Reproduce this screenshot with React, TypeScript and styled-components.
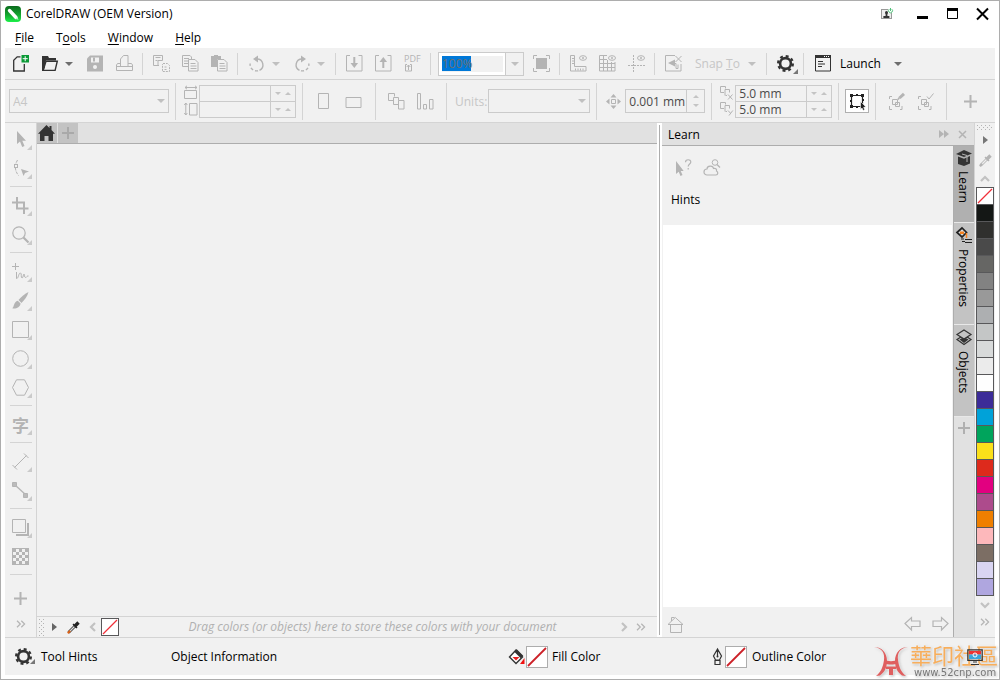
import React from "react";
import styled, { createGlobalStyle, css } from "styled-components";

const c = {
  panel: "#f1f1f1",
  head: "#e1e1e1",
  tab: "#c3c3c3",
  line: "#d4d4d4",
  edge: "#adadad",
  off: "#b4b4b4",
  offText: "#c6c6c6",
  dark: "#333333",
};

const GlobalStyle = createGlobalStyle`
  * { box-sizing: border-box; }
  body { margin: 0; background: #fff; }
  body, button, input, select { font-family: "Open Sans", "Noto Sans", sans-serif; font-size: 12px; }
  button { border: 0; padding: 0; background: none; color: inherit; }
  svg { display: block; flex: none; overflow: visible; }
`;

/* ---------- frame ---------- */

const Shell = styled.div`
  min-height: 100vh;
  display: flex;
  flex-direction: column;
  border: 1px solid ${c.edge};
  padding: 0 4px 4px;
  background: #fff;
  color: #000;
`;

const TitleBar = styled.header`
  display: flex;
  align-items: center;
  height: 25px;
  gap: 5px;
`;

const Title = styled.h1`
  margin: 0;
  flex: 1;
  font-size: 12px;
  font-weight: 400;
`;

const WindowButton = styled.button`
  width: 30px;
  height: 22px;
  display: grid;
  place-items: center;
`;

const WindowButtons = styled.div`
  display: flex;
  margin-right: -2px;
`;

const MenuBar = styled.nav`
  display: flex;
  align-items: center;
  gap: 22px;
  height: 22px;
  padding-left: 10px;
`;

const MenuItem = styled.button`
  u { text-underline-offset: 2px; }
`;

/* ---------- bars ---------- */

const Bar = styled.div<{ $tall?: boolean }>`
  display: flex;
  align-items: center;
  height: ${(p) => (p.$tall ? 43 : 32)}px;
  padding-left: ${(p) => (p.$tall ? 4 : 1)}px;
  background: ${c.panel};
  border-bottom: 1px solid ${c.line};
`;

const Rule = styled.span<{ $tall?: boolean }>`
  flex: none;
  width: 1px;
  height: ${(p) => (p.$tall ? 37 : 22)}px;
  margin: ${(p) => (p.$tall ? "0 4px 0 6px" : "0 4px 0 3px")};
  background: ${c.line};
`;

const Gap = styled.span<{ $w: number }>`
  flex: none;
  width: ${(p) => p.$w}px;
`;

const ToolButton = styled.button<{ $on?: boolean; $wide?: number }>`
  position: relative;
  flex: none;
  width: ${(p) => p.$wide ?? 29}px;
  height: 29px;
  display: flex;
  align-items: center;
  justify-content: center;
  color: ${(p) => (p.$on ? c.dark : c.off)};
`;

const Corner = styled.i<{ $on?: boolean }>`
  position: absolute;
  right: ${(p) => (p.$on ? 2 : 4)}px;
  bottom: 4px;
  border-left: 5px solid transparent;
  border-bottom: 5px solid ${(p) => (p.$on ? "#777" : "#cacaca")};
`;

const DropButton = styled(ToolButton)`
  width: 16px;
  padding-left: 1px;
  justify-content: flex-start;
  color: ${(p) => (p.$on ? "#6e6e6e" : "#c0c0c0")};
`;

const TextButton = styled.button<{ $on?: boolean }>`
  flex: none;
  width: ${(p) => (p.$on ? 101 : 75)}px;
  height: 29px;
  display: flex;
  align-items: center;
  gap: 8px;
  padding: 0 7px 0 7px;
  white-space: nowrap;
  color: ${(p) => (p.$on ? "#000" : c.offText)};
  svg:last-child { margin-left: auto; color: ${(p) => (p.$on ? "#6e6e6e" : "#c0c0c0")}; }
`;

const frame = css`
  border: 1px solid #cbcbcb;
  background: ${c.panel};
`;

const Combo = styled.div`
  display: flex;
  flex: none;
  width: 86px;
  height: 24px;
  margin: 0 3px;
  ${frame}
`;

const ComboField = styled.div`
  width: 67px;
  padding: 3px 2px 3px 3px;
  background: #fff;
  border-right: 1px solid #cbcbcb;
`;

const ZoomInput = styled.input`
  display: block;
  width: 100%;
  height: 16px;
  padding: 0;
  border: 0;
  color: #6b7075;
  background: linear-gradient(#0078d7, #0078d7) 0 0 / 29px 15px no-repeat ${c.panel};
`;

const ComboArrow = styled.button`
  flex: 1;
  display: grid;
  place-items: center;
  color: #c0c0c0;
`;

const SelectBox = styled.div<{ $width: number }>`
  display: flex;
  align-items: center;
  flex: none;
  width: ${(p) => p.$width}px;
  height: 24px;
  padding-right: 3px;
  color: #c0c0c0;
  ${frame}
  select {
    flex: 1;
    min-width: 0;
    height: 22px;
    padding: 0 0 0 3px;
    border: 0;
    appearance: none;
    background: none;
    color: ${c.offText};
    opacity: 1;
  }
`;

const Label = styled.label`
  color: ${c.offText};
  margin: 0 1px 0 4px;
`;

const Stack = styled.div`
  display: flex;
  flex: none;
  flex-direction: column;
`;

const PairField = styled.div<{ $side?: boolean }>`
  display: flex;
  flex: none;
  width: ${(p) => (p.$side ? 80 : 97)}px;
  height: ${(p) => (p.$side ? 24 : 17)}px;
  ${frame}
  & + & { margin-top: -1px; }
  input {
    flex: 1;
    min-width: 0;
    padding: 0 0 0 3px;
    border: 0;
    border-right: 1px solid #cbcbcb;
    background: none;
    color: #4a4a4a;
  }
`;

const Spin = styled.span<{ $column?: boolean }>`
  display: flex;
  flex: none;
  flex-direction: ${(p) => (p.$column ? "column" : "row")};
  align-items: center;
  justify-content: space-evenly;
  width: ${(p) => (p.$column ? 17 : 24)}px;
  color: #c4c4c4;
`;

const IconColumn = styled.div`
  display: flex;
  flex: none;
  flex-direction: column;
  gap: 2px;
  margin-right: 1px;
  color: ${c.off};
`;

const BoundsButton = styled.button`
  flex: none;
  width: 24px;
  height: 24px;
  margin-left: 2px;
  display: grid;
  place-items: center;
  background: #fff;
  border: 1px solid #b0b0b0;
  color: #222;
`;

/* ---------- body ---------- */

const Body = styled.main`
  flex: 1;
  display: flex;
  min-height: 0;
`;

const Toolbox = styled.aside`
  flex: none;
  display: flex;
  flex-direction: column;
  width: 32px;
  padding-top: 2px;
  background: ${c.panel};
  border-right: 1px solid ${c.line};
`;

const BoxTool = styled(ToolButton)<{ $high?: number }>`
  width: 31px;
  height: ${(p) => p.$high ?? 29}px;
`;

const BoxRule = styled.span`
  flex: none;
  height: 1px;
  margin: 3px 4px 4px 5px;
  background: ${c.line};
`;

const Document = styled.section`
  flex: 1;
  min-width: 0;
  display: flex;
  flex-direction: column;
  background: ${c.panel};
`;

const DocTabs = styled.div`
  display: flex;
  gap: 1px;
  height: 21px;
  background: ${c.head};
  border-bottom: 1px solid ${c.edge};
`;

const DocTab = styled.button<{ $on?: boolean }>`
  width: 20px;
  display: flex;
  align-items: center;
  padding-left: ${(p) => (p.$on ? 1 : 4)}px;
  background: ${c.tab};
  color: ${(p) => (p.$on ? c.dark : "#a9a9a9")};
`;

const Canvas = styled.div`
  flex: 1;
`;

const DocPalette = styled.div`
  display: flex;
  align-items: center;
  height: 21px;
  border-top: 1px solid ${c.line};
  padding: 0 11px 0 2px;
  color: ${c.off};
`;

const PaletteButton = styled.button<{ $w: number; $on?: boolean }>`
  flex: none;
  width: ${(p) => p.$w}px;
  height: 18px;
  display: grid;
  place-items: center;
  color: ${(p) => (p.$on ? "#666" : c.off)};
`;

const NoneSwatch = styled.button`
  flex: none;
  width: 18px;
  height: 18px;
  border: 1px solid #58585a;
  background: #fff;
`;

const PaletteHint = styled.p`
  flex: 1;
  margin: 0;
  padding-left: 14px;
  text-align: center;
  line-height: 16px;
  font-size: 12px;
  font-style: italic;
  color: #b0b0b0;
  white-space: nowrap;
`;

const Splitter = styled.div`
  flex: none;
  width: 5px;
  display: flex;
  justify-content: center;
  padding: 2px 0;
  background: #fff;
  &::after { content: ""; width: 1px; background: ${c.edge}; }
`;

const Docker = styled.section`
  flex: none;
  width: 312px;
  display: flex;
  flex-direction: column;
  background: ${c.panel};
`;

const DockerHead = styled.header`
  display: flex;
  align-items: center;
  height: 23px;
  padding: 0 4px 0 6px;
  background: ${c.head};
  border-bottom: 1px solid ${c.edge};
  color: #a8a8a8;
`;

const DockerTitle = styled.h2`
  flex: 1;
  margin: 0;
  font-size: 12px;
  font-weight: 400;
  color: #000;
`;

const DockerMain = styled.div`
  flex: 1;
  display: flex;
`;

const DockerPage = styled.div`
  flex: 1;
  display: flex;
  flex-direction: column;
  border-right: 1px solid ${c.edge};
`;

const DockerTools = styled.div`
  display: flex;
  height: 43px;
  padding-left: 7px;
  align-items: center;
`;

const Hints = styled.h3`
  height: 36px;
  margin: 0;
  padding: 3px 0 0 9px;
  font-size: 12px;
  line-height: 16px;
  font-weight: 400;
`;

const HintView = styled.div`
  flex: 1;
  margin: 0 1px;
  background: #fff;
`;

const DockerFoot = styled.footer`
  display: flex;
  align-items: center;
  height: 30px;
  padding-top: 4px;
  color: #b0b0b0;
`;

const Push = styled.span`
  flex: 1;
`;

const DockerTabs = styled.div`
  flex: none;
  width: 20px;
  display: flex;
  flex-direction: column;
  background: ${c.head};
`;

const DockerTab = styled.button<{ $h: number; $on?: boolean }>`
  height: ${(p) => p.$h}px;
  display: flex;
  flex-direction: column;
  align-items: center;
  gap: 5px;
  padding-top: 4px;
  border-bottom: 1px solid #e8e8e8;
  background: ${(p) => (p.$on ? "#b0b0b0" : c.tab)};
  color: #333;
  span { writing-mode: vertical-rl; line-height: 18px; color: #000; margin-right: 2px; }
`;

const AddTab = styled.button`
  height: 22px;
  display: grid;
  place-items: center;
  color: #b0b0b0;
`;

const ColorColumn = styled.aside`
  flex: none;
  width: 21px;
  display: flex;
  flex-direction: column;
  align-items: center;
  padding-top: 2px;
  background: ${c.panel};
  border-left: 1px solid ${c.line};
  color: ${c.off};
`;

const ColumnButton = styled.button<{ $h: number; $on?: boolean }>`
  flex: none;
  width: 18px;
  height: ${(p) => p.$h}px;
  display: grid;
  place-items: center;
  color: ${(p) => (p.$on ? "#777" : c.off)};
`;

const Swatches = styled.div`
  flex: none;
  width: 18px;
  padding: 1px 1px 0;
  background: #58585a;
`;

const Swatch = styled.button<{ $color: string }>`
  display: block;
  width: 16px;
  height: 16px;
  margin-bottom: 1px;
  background: ${(p) => p.$color};
`;

/* ---------- status ---------- */

const StatusBar = styled.footer`
  position: relative;
  display: grid;
  grid-template-columns: 157px 1fr 204px 255px 28px;
  align-items: center;
  height: 38px;
  padding-left: 9px;
  background: ${c.panel};
  border-top: 1px solid ${c.line};
`;

const StatusItem = styled.div<{ $gap?: number }>`
  display: flex;
  align-items: center;
  gap: ${(p) => p.$gap ?? 1}px;
  white-space: nowrap;
  span { margin-left: 3px; }
`;

const GearSlot = styled.button`
  position: relative;
  width: 23px;
  height: 22px;
  padding-left: 1px;
  display: flex;
  align-items: center;
`;

const ColorWell = styled.button`
  width: 22px;
  height: 22px;
  border: 1px solid #adadad;
  background: #fff;
`;

const ProofButton = styled.button`
  position: relative;
  z-index: 1;
  width: 16px;
`;

const Watermark = styled.div`
  position: absolute;
  right: -3px;
  bottom: -4px;
  display: flex;
  align-items: center;
  gap: 2px;
  filter: drop-shadow(0 0 1px #fff) drop-shadow(1px 1px 1px #bbb);
`;

const MarkText = styled.div`
  display: flex;
  flex-direction: column;
`;

const MarkName = styled.strong`
  font-family: "Noto Sans CJK TC", sans-serif;
  font-size: 22px;
  line-height: 24px;
  font-weight: 400;
  color: #f7ae5c;
`;

const MarkSite = styled.small`
  font-family: "DejaVu Sans", sans-serif;
  font-size: 10px;
  line-height: 13px;
  padding-left: 4px;
  color: #777;
`;

/* ---------- drawings ---------- */

const S = ({ w = 17, h = 17, children }: { w?: number; h?: number; children: React.ReactNode }) => (
  <svg width={w} height={h} viewBox={`0 0 ${w} ${h}`} fill="none" stroke="currentColor" aria-hidden="true">
    {children}
  </svg>
);
const Fill = ({ d, color = "currentColor" }: { d: string; color?: string }) => <path d={d} fill={color} stroke="none" />;

const Down = ({ w = 8 }: { w?: number }) => (
  <S w={w} h={w / 2}><Fill d={`M0 0H${w}L${w / 2} ${w / 2}z`} /></S>
);
const Up = ({ w = 6 }: { w?: number }) => (
  <S w={w} h={w / 2}><Fill d={`M0 ${w / 2}H${w}L${w / 2} 0z`} /></S>
);

const Logo = () => (
  <S w={16} h={16}>
    <defs>
      <linearGradient id="logo" x1="0" y1="0" x2="0" y2="1">
        <stop offset="0" stopColor="#0b6b1d" />
        <stop offset="0.55" stopColor="#14a52f" />
        <stop offset="1" stopColor="#1df04a" />
      </linearGradient>
    </defs>
    <rect width="16" height="16" rx="4" fill="url(#logo)" stroke="none" />
    <path d="M4.5 4.5L11 11.5" stroke="#fff" strokeWidth="3.4" strokeLinecap="round" />
    <path d="M10.5 12.5l3 1.5-1-3z" fill="#bff5c8" stroke="none" />
  </S>
);

const User = () => (
  <S w={12} h={12}>
    <rect x="0.5" y="1.5" width="10" height="9" stroke="#999" fill="#eee" />
    <circle cx="5.5" cy="4.5" r="1.5" fill="#333" stroke="none" />
    <Fill d="M4.6 5h1.8v3h2v2h-6V8h2.2z" color="#333" />
    <rect x="7" y="0" width="5" height="5" fill="#fff" stroke="none" />
    <path d="M8.2 1.2a2 2 0 1 0 2.6 0M9.5 0v3" stroke="#4fc078" />
  </S>
);

const NewDoc = () => (
  <S>
    <path d="M8.5 1.8H5.2L1.7 5.3V16H12.3V9" stroke="#333" strokeWidth="1.3" />
    <Fill d="M9.500 0h7.500v7.500H9.500z" color="#0a9a36" />
    <path d="M13.200 1.200v5M10.700 3.700h5" stroke="#fff" />
  </S>
);
const Folder = () => (
  <S>
    <Fill d="M1 1h6l1 2h7v2.500H5L2.200 15H1z" />
    <path d="M5 6.200h11.300l-2.200 9.200H2.200z" strokeWidth="1.400" />
    <Fill d="M1 4h3v8l-2 4H1z" />
  </S>
);
const Save = () => (
  <S>
    <Fill d="M3 0.500h13v16H0V3.500z" />
    <path d="M4 2.500h8v5H4z" fill="#f1f1f1" stroke="none" />
    <Fill d="M6 2.500h2v4H6z" />
    <circle cx="8" cy="12" r="2" fill="#f1f1f1" stroke="none" />
  </S>
);
const Print = () => (
  <S>
    <path d="M5 8.500H1.500L.5 10v5.500h16V10l-1-1.500H12M.5 11.500h16M4.500 11V4l3-3.500h4.500V11" />
  </S>
);
const Cut = () => (
  <S>
    <path d="M6 10.500H.5V.5h9v5H5v5M2.500 2.500h5M2.500 5.500h2" />
    <path d="M10 8.500h4.500l2 2v6H9.500V9M11.500 12h3M11.500 14.500h3" strokeDasharray="2 1" />
  </S>
);
const Copy = () => (
  <S>
    <path d="M6 11.500H.5V.5H8l1.500 1.500v2M2 3.500h5M2 6h4M2 8.500h4" />
    <path d="M6.500 4.500H13l3 3v8.500H6.500zM8.500 8.500h5M8.500 11h6M8.500 13.500h6" />
  </S>
);
const Paste = () => (
  <S>
    <Fill d="M0 1h3V0h4v1h3v3H6v8H0z" />
    <path d="M6.500 4.500H13l3 3v8.500H6.500zM8.500 8.500h5M8.500 11h6M8.500 13.500h6" />
  </S>
);
const UndoArc = () => (
  <>
    <path d="M8 4a6 6 0 0 1 2.500 11.400" strokeWidth="1.400" />
    <path d="M9 15.700A6.300 6.300 0 0 1 1.200 8.500" strokeWidth="1.400" strokeDasharray="3 2" />
    <Fill d="M4 4L9 0.500v7z" />
  </>
);
const Undo = () => <S w={16}><UndoArc /></S>;
const Redo = () => <S w={16}><g transform="matrix(-1 0 0 1 16 0)"><UndoArc /></g></S>;
const Import = () => (
  <S>
    <path d="M4 .5H.5v15.500h15.500V.5H12.500" />
    <path d="M8.300 2v7" strokeWidth="2" />
    <Fill d="M4.500 8h7.600l-3.800 5z" />
  </S>
);
const Export = () => (
  <S>
    <path d="M4 .5H.5v15.500h15.500V.5H12.500" />
    <path d="M8.300 13V6" strokeWidth="2" />
    <Fill d="M4.500 7h7.600L8.300 2z" />
  </S>
);
const PdfText = styled.text`
  font: 9px "Open Sans", sans-serif;
  fill: currentColor;
  stroke: none;
`;
const Pdf = () => (
  <S w={19}>
    <PdfText x="1" y="7">PDF</PdfText>
    <path d="M4 9.500H2.500v6.500h6V9.500H7M5.500 15v-5M3.700 12l1.800-2 1.800 2" />
  </S>
);
const Full = () => (
  <S>
    <path d="M4 .5H.5V4M13 .5h3.500V4M4 16.500H.5V13M13 16.500h3.500V13" />
    <Fill d="M3 3h11v11H3z" />
  </S>
);
const Eye = () => (
  <>
    <ellipse cx="13" cy="3" rx="3.500" ry="2.300" />
    <circle cx="13" cy="3" r="1" fill="currentColor" stroke="none" />
  </>
);
const Rulers = () => (
  <S>
    <path d="M.5.500h4v11H16v4.500H.5zM2 3.500h2M2 6h2M2 8.500h2M5.500 13.500v2M8 13.500v2M10.500 13.500v2M13 13.500v2" />
    <Eye />
  </S>
);
const Grid = () => (
  <S>
    <path d="M8 .5H.5v15.500H16V7M0 4.500h8M0 8.500h16M0 12.500h16M4.500 0v16M8.500 5v11M12.500 7v9" />
    <Eye />
  </S>
);
const Guides = () => (
  <S>
    <path d="M5.500 0v17M0 10.500h17" strokeDasharray="2 1" />
    <Eye />
  </S>
);
const SnapOff = () => (
  <S>
    <path d="M10 .5H.5v15.500H16V9M10.500 1l6 6M16.500 1l-6 6" />
    <Fill d="M3 8l7-3.500v7z" />
    <path d="M8 8.500h3v5h2v-4" />
  </S>
);
const Gear = ({ color = "#333" }: { color?: string }) => (
  <S>
    <circle cx="8.500" cy="8.500" r="5.400" stroke={color} strokeWidth="2.600" />
    <circle cx="8.500" cy="8.500" r="7.400" stroke={color} strokeWidth="2.200" strokeDasharray="2.906 2.906" />
  </S>
);
const LaunchIcon = () => (
  <S>
    <path d="M.5.500h15v15.500H.5zM3 6.500h5M3 9h7M3 11.500h4" stroke="#333" />
    <Fill d="M0 0h16v3H0z" color="#333" />
    <path d="M9 1.500h1M11 1.500h1M13 1.500h1" stroke="#fff" />
  </S>
);

const PageW = () => (
  <S w={14} h={15}>
    <path d="M1 2.500h12M3 .8L1 2.500l2 1.700M11 .8l2 1.700-2 1.700M.5 5.500h12v8H.5z" />
  </S>
);
const PageH = () => (
  <S w={14} h={15}>
    <path d="M1.800 1v12M.3 3l1.500-2 1.500 2M.3 11l1.500 2 1.500-2M5.500 1.500h7.500v11.500H5.500z" />
  </S>
);
const Portrait = () => <S><path d="M1.500.500h10v15h-10z" /></S>;
const Landscape = () => <S><path d="M0 4.500h15v10H0z" /></S>;
const AllPages = () => (
  <S><path d="M5 7.500H.5V.5h6v3M10 11.500H5.500v-7h5v3M10.500 7.500h5.500v8.500h-5.500z" /></S>
);
const Heights = () => (
  <S><path d="M.5.500h3v15.500h-3zM6.500 11.500h3v4.500h-3zM12.500 6.500h3.500v9.500h-3.500z" /></S>
);
const Nudge = () => (
  <S w={15} h={15}>
    <path d="M5.500 5.500h4v4h-4z" />
    <Fill d="M7.500 0l3 3.500h-6zM7.500 15l3-3.500h-6zM0 7.500l3.500-3v6zM15 7.500l-3.500-3v6z" />
  </S>
);
const Dup = ({ axis }: { axis: string }) => (
  <S w={14} h={14}>
    <path d="M4 6.500H.5v-6h5v2M5 9.500V3.500h4.500v3M7 9.500H5.500" />
    {axis === "x" ? <path d="M8 8.500l4.500 5M12.500 8.500L8 13.500" /> : <path d="M8 8.500l2.300 2.500M12.800 8.500L9 13.500" />}
  </S>
);
const Bounds = () => (
  <S>
    <path d="M2.500 2.500h11v11h-11z" strokeWidth="1.200" />
    <Fill d="M1 1h3v3H1zM12 1h3v3h-3zM1 12h3v3H1zM7 1h2v2H7zM1 7h2v2H1zM7 13h2v2H7zM13 6h2v2h-2z" />
    <path d="M11.500 8.500l5.500 5.500-2.300.300 1 2.500-1.500.700-1.200-2.500-1.500 1.500z" fill="#222" stroke="#fff" strokeWidth="0.600" />
  </S>
);
const Objs = () => (
  <path d="M4 3.500H1.500V6M1.500 13v3.500H4M12 16.500h2V13M4.500 6.500h5v5h-5zM7.500 9.500h4v4h-4z" />
);
const EditObjs = () => (
  <S><Objs /><path d="M10 6.500l1.500-2" strokeWidth="1.500" /><path d="M11.500 5L16 .8" strokeWidth="3" /></S>
);
const CheckObjs = () => (
  <S><Objs /><path d="M10 3.500l2 2.500L16.500.5" /></S>
);
const Plus = ({ s = 13 }: { s?: number }) => (
  <S w={s} h={s}><path d={`M${s / 2} 0V${s}M0 ${s / 2}H${s}`} strokeWidth="2" /></S>
);

const Pick = () => <S><Fill d="M5 0v13l3-2.500 2.200 5.500 2.300-1-2.200-5.200H14z" /></S>;
const Shape = () => (
  <S>
    <path d="M5.500 0C3 4 2 10 6.500 15.500" strokeDasharray="3 1" />
    <rect x="2.500" y="4.500" width="3" height="3" fill="#f1f1f1" />
    <Fill d="M9 9l8 2.500-4 1.500-1.500 3z" />
  </S>
);
const Crop = () => (
  <S><path d="M5 0v11.500h11.500M0 5.500h12V17" strokeWidth="2" /></S>
);
const Zoom = () => (
  <S><circle cx="7" cy="7" r="6.200" strokeWidth="1.200" /><path d="M11.500 11.500l5 5" strokeWidth="2.200" /></S>
);
const Freehand = () => (
  <S><path d="M3.500 0v7M0 3.500h7M4.500 9v6.500c2 .500 2-6 4-5.500 1.500 0 0 5 1.500 5s1-4 2-4 0 3.500 1.500 3.500S15 12.500 16.500 13" /></S>
);
const Brush = () => (
  <S><Fill d="M16.500 0C13 1.500 9 5 6.500 8l3 3C12.500 8 15.500 4 16.500 0z" /><Fill d="M5.800 8.800l2.800 2.700C8 15.500 4 17 .3 16.300 2.300 15 1.500 10 5.800 8.800z" /></S>
);
const Rect = () => <S><path d="M.5.500h16v16h-16z" /></S>;
const Ellipse = () => <S><circle cx="8.500" cy="8.500" r="7.800" /></S>;
const Polygon = () => <S><path d="M4.500.800h8l4 7.700-4 7.700h-8L.500 8.500z" /></S>;
const GlyphTool = styled.span`
  font: 700 17px/17px "Noto Sans CJK SC", sans-serif;
`;
const Dimension = () => (
  <S><path d="M2.500 14.500l12-12M.5 12l4.500 4.500M12 .5L16.500 5" /></S>
);
const Connector = () => (
  <S><path d="M3 3l11 10" strokeWidth="1.300" /><path d="M.5.500h4v4h-4zM11.500 11.500h4v4h-4z" fill="#bbb" /></S>
);
const Shadow = () => (
  <S><path d="M.5.500h13v13h-13z" /><path d="M16 4v12H4" strokeWidth="2" /></S>
);
const Checker = () => (
  <S>
    <rect x="0.500" y="0.500" width="16" height="16" />
    {[0, 1, 2, 3, 4].map((r) =>
      [0, 1, 2, 3, 4].map((k) => ((r + k) % 2 ? null : <rect key={`${r}${k}`} x={1 + k * 3} y={1 + r * 3} width="3" height="3" fill="currentColor" stroke="none" />))
    )}
  </S>
);
const More = () => <S w={10} h={8}><path d="M1 .8L4.300 4 1 7.200M5.300.800L8.600 4 5.300 7.200" strokeWidth="1.200" /></S>;
const HomeIcon = () => <S><Fill d="M8.500 0L11.500 3V1h2v4l3.500 3.700h-2V16h-4.500v-5h-4v5H2V8.700H0z" /></S>;

const Dots = ({ wide }: { wide?: boolean }) => {
  const n = wide ? 4 : 5;
  return (
    <S w={wide ? 16 : 6} h={wide ? 5 : 16}>
      {Array.from({ length: n }, (_, i) => i * 4).map((p) =>
        wide ? (
          <Fill key={p} d={`M${p} 0h1v1h-1zM${p + 2} 2h1v1h-1zM${p} 4h1v1h-1z`} />
        ) : (
          <Fill key={p} d={`M0 ${p}h1v1H0zM2 ${p + 2}h1v1H2zM4 ${p}h1v1H4z`} />
        )
      )}
    </S>
  );
};
const Right = () => <S w={5} h={8}><Fill d="M0 0l5 4-5 4z" /></S>;
const Chevron = ({ d }: { d: string }) => <S w={10} h={10}><path d={d} strokeWidth="2.200" stroke="#c2c2c2" /></S>;
const Dropper = ({ on }: { on?: boolean }) => (
  <S w={13} h={13}>
    <path d="M1.500 11.500L8 5" stroke={on ? "#333" : "currentColor"} strokeWidth="2.800" />
    <path d="M2.500 10.500L8 5" stroke={on ? "#ddd" : "#eee"} strokeWidth="1.200" />
    <path d="M.8 12.200l2.400-2.400" stroke={on ? "#e0651a" : "currentColor"} strokeWidth="2" />
    <path d="M7.500 5.500l4-4" stroke={on ? "#222" : "currentColor"} strokeWidth="3.400" />
    <path d="M6 3l4 4" stroke={on ? "#222" : "currentColor"} strokeWidth="1.400" />
  </S>
);
const NoColor = ({ s = 16 }: { s?: number }) => (
  <S w={s} h={s}><path d={`M1 ${s - 1}L${s - 1} 1`} stroke={s > 16 ? "#cc2027" : "#f0303a"} strokeWidth={s > 16 ? 1.8 : 1.2} /></S>
);

const WhatsThis = () => (
  <S w={19}><Fill d="M2 2v13l2.700-2.300L6.500 17l2-1-1.800-4h3z" /><path d="M11.500 3.200C11.500 0 16.800 0 16.800 3c0 2-2.600 2-2.600 4.500M14.200 9v1.500" strokeWidth="1.200" /></S>
);
const CloudSearch = () => (
  <S w={19}><path d="M4 16a3 3 0 0 1 0-6c0-3.500 6-4 6.500-.5 2-.5 3.500.5 3 2.500 2 1 1.500 4-.5 4z" strokeWidth="1.200" /><circle cx="12" cy="3.500" r="2.800" /><path d="M14 5.500l3 3" strokeWidth="1.300" /></S>
);
const Cap = () => (
  <S w={16} h={16}><Fill d="M0 4l8-4 8 3.500L8 7z" /><Fill d="M2 6.500l6 2.300L14 6v7.500L8 16l-6-2z" /><path d="M6 4l5 1.500V12" stroke="#b0b0b0" /></S>
);
const Props = () => (
  <S w={16} h={17}>
    <path d="M1 5.500L6 1l4.500 4.500L6 10z" strokeWidth="1.700" stroke="#222" fill="#ddd" />
    <Fill d="M4 4.500h4v2.500H4z" color="#f58220" />
    <path d="M10.500 6v5" stroke="#f58220" strokeWidth="1.500" />
    <path d="M5 12h3M6 14.500h3M9 12.500h7M9 15.500h7" stroke="#222" />
  </S>
);
const Layers = () => (
  <S w={16} h={17}>
    <path d="M1 10.500L8 6l7 4.500L8 15.500z" strokeWidth="1.200" />
    <Fill d="M3.500 10.500L8 8l4.500 2.500L8 14z" />
    <path d="M8 1l7 4.500L8 10 1 5.500z" strokeWidth="1.200" fill={c.tab} />
  </S>
);
const FootHome = () => <S w={17}><path d="M1 8.500L8.300 1.500 16 8.500zM3.500 9v7.500h11V9M4.500 5V1.500h3" /></S>;
const ArrowL = () => <S w={17} h={16}><path d="M1 7.500L7.500 1.500v3.500h8.500v5.500H7.500V14z" strokeWidth="1.200" /></S>;
const ArrowR = () => <S w={17} h={16}><path d="M16 7.500L9.500 1.500v3.500H1v5.500h8.500V14z" strokeWidth="1.200" /></S>;
const Bucket = () => (
  <S w={17} h={17}>
    <path d="M1.500 9L8 2l6.500 7L8 15.500z" stroke="#333" strokeWidth="1.400" fill="#fff" />
    <path d="M7.500 2.500l6.500 6.500" stroke="#333" strokeWidth="3.500" />
    <Fill d="M4.500 9h7L8 12.500z" color="#e61e1e" />
    <Fill d="M16.500 10v6h-4.500z" color="#f01010" />
  </S>
);
const Pen = () => (
  <S w={11} h={17}>
    <path d="M5.500 1L1.500 8l2 4h4l2-4zM5.500 1v7M3 12.500h5v4H3z" stroke="#333" strokeWidth="1.200" />
    <circle cx="5.500" cy="8.500" r="1" fill="#333" stroke="none" />
  </S>
);
const Proof = () => (
  <S w={16} h={16}>
    <path d="M.8.800h14.400v10.500H.8zM4 15.500h8M6 13h4" stroke="#333" strokeWidth="1.200" />
    <Fill d="M2 2h12v3.500H2z" color="#e33" />
    <Fill d="M2 5.500h12V10H2z" color="#3aa5dc" />
    <circle cx="8" cy="6" r="2" stroke="#fff" />
  </S>
);
const Emblem = () => (
  <svg width="34" height="32" viewBox="0 0 34 32" aria-hidden="true">
    <g fill="#df5f5f">
      <path d="M0 2C8 3 11 8 10 15C9 22 7 27 2 31L6 30.500C11 27 13 22 13 16C13 8 8 2 0 2z" />
      <path d="M34 2C26 3 23 8 24 15C25 22 27 27 32 31L28 30.500C23 27 21 22 21 16C21 8 26 2 34 2z" />
      <path d="M10 14C14 17 20 17 24 14V18C20 20 14 20 10 18z" />
      <path d="M12 21.500h10V24h-3v6h-4v-6h-3z" />
    </g>
  </svg>
);

/* ---------- content ---------- */

const swatches = [
  "#141715", "#30302e", "#4a4a4a", "#666664", "#828282", "#999999", "#adafb1", "#c4c6c6",
  "#d8dada", "#ebebeb", "#fefefe", "#3c2c98", "#00a2d9", "#00a45c", "#fbe01a", "#dd2a1c",
  "#e20080", "#ad4b8c", "#ef7f00", "#fdb8bb", "#7c6e64", "#d9d5f2", "#afa6df",
];

const toolGroups: [string, React.ReactNode, boolean][][] = [
  [["Pick", <Pick />, true], ["Shape", <Shape />, true]],
  [["Crop", <Crop />, true], ["Zoom", <Zoom />, true]],
  [["Freehand", <Freehand />, true], ["Brush", <Brush />, true], ["Rectangle", <Rect />, true], ["Ellipse", <Ellipse />, true], ["Polygon", <Polygon />, true]],
  [["Text", <GlyphTool>字</GlyphTool>, true]],
  [["Dimension", <Dimension />, true], ["Connector", <Connector />, true]],
  [["Drop shadow", <Shadow />, true], ["Transparency", <Checker />, false]],
];

const Tool = ({ name, children, on, wide }: { name: string; children: React.ReactNode; on?: boolean; wide?: number }) => (
  <ToolButton aria-label={name} $on={on} $wide={wide}>{children}</ToolButton>
);

const NumberPair = ({ names, value }: { names: string[]; value: string }) => (
  <Stack>
    {names.map((n) => (
      <PairField key={n}>
        <input aria-label={n} defaultValue={value} />
        <Spin><Down w={6} /><Up /></Spin>
      </PairField>
    ))}
  </Stack>
);

export default function App() {
  return (
    <>
      <GlobalStyle />
      <Shell>
        <TitleBar>
          <Logo />
          <Title>CorelDRAW (OEM Version)</Title>
          <WindowButton aria-label="Account"><User /></WindowButton>
          <WindowButtons>
            <WindowButton aria-label="Minimize"><S w={11} h={11}><Fill d="M0 8h11v3H0z" color="#000" /></S></WindowButton>
            <WindowButton aria-label="Maximize"><S w={11} h={11}><path d="M.5 1h10v9.500H.5z" stroke="#000" /><Fill d="M0 0h11v3H0z" color="#000" /></S></WindowButton>
            <WindowButton aria-label="Close"><S w={13} h={12}><path d="M1 .5l11 11M12 .5l-11 11" stroke="#000" strokeWidth="2" /></S></WindowButton>
          </WindowButtons>
        </TitleBar>
        <MenuBar>
          <MenuItem><u>F</u>ile</MenuItem>
          <MenuItem>T<u>o</u>ols</MenuItem>
          <MenuItem><u>W</u>indow</MenuItem>
          <MenuItem><u>H</u>elp</MenuItem>
        </MenuBar>

        <Bar>
          <Tool name="New" on><NewDoc /></Tool>
          <Tool name="Open" on><Folder /></Tool>
          <DropButton aria-label="Recent files" $on><Down /></DropButton>
          <Gap $w={1} />
          <Tool name="Save"><Save /></Tool>
          <Tool name="Print"><Print /></Tool>
          <Rule />
          <Tool name="Cut"><Cut /></Tool>
          <Tool name="Copy"><Copy /></Tool>
          <Tool name="Paste"><Paste /></Tool>
          <Rule />
          <Tool name="Undo"><Undo /></Tool>
          <DropButton aria-label="Undo list"><Down /></DropButton>
          <Tool name="Redo"><Redo /></Tool>
          <DropButton aria-label="Redo list"><Down /></DropButton>
          <Rule />
          <Tool name="Import"><Import /></Tool>
          <Tool name="Export"><Export /></Tool>
          <Tool name="Publish to PDF"><Pdf /></Tool>
          <Rule />
          <Combo>
            <ComboField><ZoomInput aria-label="Zoom level" defaultValue="100%" /></ComboField>
            <ComboArrow aria-label="Zoom levels"><Down /></ComboArrow>
          </Combo>
          <Tool name="Full-screen preview"><Full /></Tool>
          <Rule />
          <Tool name="Show rulers"><Rulers /></Tool>
          <Tool name="Show grid"><Grid /></Tool>
          <Tool name="Show guidelines"><Guides /></Tool>
          <Rule />
          <Tool name="Snap off"><SnapOff /></Tool>
          <TextButton><span>Snap <u>T</u>o</span><Down /></TextButton>
          <Rule />
          <ToolButton aria-label="Options" $on><Gear /><Corner $on /></ToolButton>
          <Rule />
          <TextButton $on><LaunchIcon /><span>Launch</span><Down /></TextButton>
        </Bar>

        <Bar $tall>
          <SelectBox $width={160}>
            <select aria-label="Page size" disabled><option>A4</option></select>
            <Down />
          </SelectBox>
          <Rule $tall />
          <Gap $w={4} />
          <IconColumn><PageW /><PageH /></IconColumn>
          <NumberPair names={["Page width", "Page height"]} value="" />
          <Rule $tall />
          <Gap $w={4} />
          <Tool name="Portrait"><Portrait /></Tool>
          <Tool name="Landscape"><Landscape /></Tool>
          <Rule $tall />
          <Gap $w={2} />
          <Tool name="All pages"><AllPages /></Tool>
          <Tool name="Current page"><Heights /></Tool>
          <Rule $tall />
          <Label htmlFor="units">Units:</Label>
          <SelectBox $width={102}>
            <select id="units" disabled><option></option></select>
            <Down />
          </SelectBox>
          <Rule $tall />
          <ToolButton as="span" $wide={24}><Nudge /></ToolButton>
          <PairField $side>
            <input aria-label="Nudge distance" defaultValue="0.001 mm" />
            <Spin $column><Up /><Down w={6} /></Spin>
          </PairField>
          <Rule $tall />
          <Gap $w={4} />
          <IconColumn><Dup axis="x" /><Dup axis="y" /></IconColumn>
          <NumberPair names={["Duplicate distance X", "Duplicate distance Y"]} value="5.0 mm" />
          <Rule $tall />
          <BoundsButton aria-label="Treat as filled"><Bounds /></BoundsButton>
          <Rule $tall />
          <Gap $w={2} />
          <Tool name="Edit objects"><EditObjs /></Tool>
          <Tool name="Select objects"><CheckObjs /></Tool>
          <Rule $tall />
          <Tool name="Customize" wide={39}><Plus /></Tool>
        </Bar>

        <Body>
          <Toolbox>
            {toolGroups.map((group, i) => (
              <React.Fragment key={i}>
                {group.map(([name, icon, more]) => (
                  <BoxTool key={name} aria-label={name}>{icon}{more && <Corner />}</BoxTool>
                ))}
                <BoxRule />
              </React.Fragment>
            ))}
            <BoxTool aria-label="Add tools" $high={38}><Plus /></BoxTool>
            <BoxTool aria-label="More tools" $high={14}><More /></BoxTool>
          </Toolbox>

          <Document>
            <DocTabs>
              <DocTab aria-label="Welcome screen" $on><HomeIcon /></DocTab>
              <DocTab aria-label="New document"><Plus s={12} /></DocTab>
            </DocTabs>
            <Canvas />
            <DocPalette>
              <Dots />
              <PaletteButton $w={18} $on aria-label="Palette menu"><Right /></PaletteButton>
              <PaletteButton $w={21} aria-label="Sample color"><Dropper on /></PaletteButton>
              <PaletteButton $w={17} aria-label="Scroll left"><Chevron d="M7 1L3 5l4 4" /></PaletteButton>
              <NoneSwatch aria-label="No color"><NoColor /></NoneSwatch>
              <PaletteHint>Drag colors (or objects) here to store these colors with your document</PaletteHint>
              <PaletteButton $w={24} aria-label="Scroll right"><Chevron d="M3 1l4 4-4 4" /></PaletteButton>
              <PaletteButton $w={10} aria-label="More colors"><More /></PaletteButton>
            </DocPalette>
          </Document>

          <Splitter />

          <Docker>
            <DockerHead>
              <DockerTitle>Learn</DockerTitle>
              <PaletteButton $w={20} aria-label="Collapse docker"><S w={10} h={8}><Fill d="M0 0l5 4-5 4zM5 0l5 4-5 4z" /></S></PaletteButton>
              <PaletteButton $w={16} aria-label="Close docker"><S w={9} h={9}><path d="M1 1l7 7M8 1L1 8" strokeWidth="1.500" /></S></PaletteButton>
            </DockerHead>
            <DockerMain>
              <DockerPage>
                <DockerTools>
                  <Tool name="What's this"><WhatsThis /></Tool>
                  <Tool name="Explore"><CloudSearch /></Tool>
                </DockerTools>
                <Hints>Hints</Hints>
                <HintView />
                <DockerFoot>
                  <Tool name="Home" wide={26}><FootHome /></Tool>
                  <Push />
                  <Tool name="Back"><ArrowL /></Tool>
                  <Tool name="Forward" wide={26}><ArrowR /></Tool>
                </DockerFoot>
              </DockerPage>
              <DockerTabs>
                <DockerTab $h={77} $on><Cap /><span>Learn</span></DockerTab>
                <DockerTab $h={102}><Props /><span>Properties</span></DockerTab>
                <DockerTab $h={92}><Layers /><span>Objects</span></DockerTab>
                <AddTab aria-label="Add docker"><Plus s={12} /></AddTab>
              </DockerTabs>
            </DockerMain>
          </Docker>

          <ColorColumn>
            <Dots wide />
            <ColumnButton $h={20} $on aria-label="Palette options"><Right /></ColumnButton>
            <ColumnButton $h={20} aria-label="Eyedropper"><Dropper /></ColumnButton>
            <ColumnButton $h={17} aria-label="Scroll up"><Chevron d="M1 7l4-4 4 4" /></ColumnButton>
            <Swatches>
              <Swatch $color="#fff" aria-label="No color"><NoColor /></Swatch>
              {swatches.map((s) => <Swatch key={s} $color={s} aria-label={s} />)}
            </Swatches>
            <ColumnButton $h={17} aria-label="Scroll down"><Chevron d="M1 3l4 4 4-4" /></ColumnButton>
            <ColumnButton $h={18} aria-label="More colors"><More /></ColumnButton>
          </ColorColumn>
        </Body>

        <StatusBar>
          <StatusItem>
            <GearSlot aria-label="Status options"><Gear /><Corner $on /></GearSlot>
            <span>Tool Hints</span>
          </StatusItem>
          <div>Object Information</div>
          <StatusItem>
            <Bucket /><ColorWell aria-label="Fill color"><NoColor s={20} /></ColorWell><span>Fill Color</span>
          </StatusItem>
          <StatusItem $gap={2}>
            <Pen /><ColorWell aria-label="Outline color"><NoColor s={20} /></ColorWell><span>Outline Color</span>
          </StatusItem>
          <ProofButton aria-label="Proof settings"><Proof /></ProofButton>
          <Watermark>
            <Emblem />
            <MarkText>
              <MarkName>華印社區</MarkName>
              <MarkSite>www.52cnp.com</MarkSite>
            </MarkText>
          </Watermark>
        </StatusBar>
      </Shell>
    </>
  );
}
